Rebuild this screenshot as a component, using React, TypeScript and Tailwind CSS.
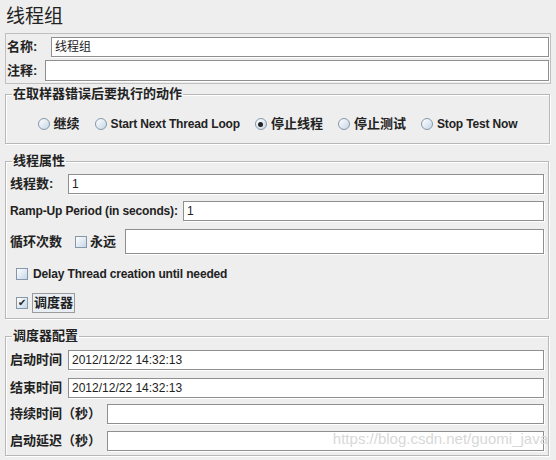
import type { ReactNode } from "react";

const Field = ({ value = "", className = "" }: { value?: string; className?: string }) => (
  <div
    className={`bg-white border border-[#8f8f8f] shadow-[1px_1px_0_#ffffff] flex items-center pl-[3px] text-[12px] font-normal text-[#222] ${className}`}
  >
    {value}
  </div>
);

const Cn = ({ children, className = "" }: { children: ReactNode; className?: string }) => (
  <span className={`shrink-0 whitespace-nowrap text-[13px] font-bold text-[#222] ${className}`}>{children}</span>
);

const En = ({ children, className = "" }: { children: ReactNode; className?: string }) => (
  <span className={`shrink-0 whitespace-nowrap text-[12px] font-bold tracking-[-0.15px] text-[#222] ${className}`}>
    {children}
  </span>
);

const Radio = ({ checked = false }: { checked?: boolean }) => (
  <span className="w-[12px] h-[12px] rounded-full border border-[#8497ab] bg-gradient-to-br from-white to-[#c6d6e6] flex items-center justify-center">
    {checked && <span className="w-[5px] h-[5px] rounded-full bg-[#222]" />}
  </span>
);

const Check = ({ checked = false }: { checked?: boolean }) => (
  <span className="shrink-0 w-[12px] h-[12px] border border-[#8497ab] bg-gradient-to-br from-white to-[#c6d6e6] flex items-center justify-center text-[10px] leading-none text-[#222]">
    {checked && "✔"}
  </span>
);

const Group = ({ title, className = "", children }: { title: string; className?: string; children: ReactNode }) => (
  <fieldset className={`ml-[5px] border border-[#b8b8b8] shadow-[inset_1px_1px_0_#ffffff,1px_1px_0_#ffffff] ${className}`}>
    <legend className="ml-[6px] px-[1px] text-[13px] leading-[14px] font-bold text-[#222]">{title}</legend>
    {children}
  </fieldset>
);

const actions = [
  { label: "继续", cn: true },
  { label: "Start Next Thread Loop", cn: false },
  { label: "停止线程", cn: true, checked: true },
  { label: "停止测试", cn: true },
  { label: "Stop Test Now", cn: false },
];

export default function App() {
  return (
    <div className="relative w-[556px] h-[460px] overflow-hidden bg-[#eeeeee] font-['Liberation_Sans','Noto_Sans_CJK_SC',sans-serif] text-[#222]">
      <div className="h-[33px] pl-[6px] pt-[6px] text-[19px] leading-[22px]">线程组</div>

      <div className="ml-[5px] w-[546px] h-[51px] border border-[#c0c0c0] pt-[3px] flex flex-col gap-[3px]">
        <div className="flex items-center h-[20px]">
          <Cn className="w-[45px] pl-[1px]">名称:</Cn>
          <Field value="线程组" className="flex-1 h-[20px] mr-[1px]" />
        </div>
        <div className="flex items-center h-[21px]">
          <Cn className="w-[39px] pl-[1px]">注释:</Cn>
          <Field className="flex-1 h-[21px] mr-[1px]" />
        </div>
      </div>

      <Group title="在取样器错误后要执行的动作" className="mt-[3px] w-[545px] h-[57px]">
        <div className="mt-[15px] h-[16px] flex items-center justify-center gap-[15px]">
          {actions.map((a) => (
            <div key={a.label} className="flex items-center gap-[4px]">
              <Radio checked={a.checked} />
              {a.cn ? <Cn>{a.label}</Cn> : <En>{a.label}</En>}
            </div>
          ))}
        </div>
      </Group>

      <Group title="线程属性" className="mt-[10px] w-[544px] h-[165px]">
        <div className="mt-[6px] flex items-center h-[20px]">
          <Cn className="w-[62px] pl-[4px]">线程数:</Cn>
          <Field value="1" className="flex-1 h-[20px] mr-[4px]" />
        </div>
        <div className="mt-[7px] flex items-center h-[20px]">
          <En className="w-[177px] pl-[4px]">Ramp-Up Period (in seconds):</En>
          <Field value="1" className="flex-1 h-[20px] mr-[4px]" />
        </div>
        <div className="mt-[8px] flex items-center h-[25px]">
          <Cn className="w-[69px] pl-[4px]">循环次数</Cn>
          <Check />
          <Cn className="ml-[3px]">永远</Cn>
          <Field className="flex-1 h-[25px] ml-[9px] mr-[4px]" />
        </div>
        <div className="mt-[12px] flex items-center h-[16px] pl-[10px]">
          <Check />
          <En className="ml-[5px]">Delay Thread creation until needed</En>
        </div>
        <div className="mt-[11px] flex items-center h-[20px] pl-[10px]">
          <Check checked />
          <span className="ml-[4px] h-[20px] flex items-center px-[1px] border border-[#9a9a9a] bg-[#e8eef4]">
            <Cn>调度器</Cn>
          </span>
        </div>
      </Group>

      <Group title="调度器配置" className="mt-[10px] w-[544px] h-[127px]">
        <div className="mt-[7px] flex items-center h-[20px]">
          <Cn className="w-[62px] pl-[4px]">启动时间</Cn>
          <Field value="2012/12/22 14:32:13" className="flex-1 h-[20px] mr-[4px]" />
        </div>
        <div className="mt-[8px] flex items-center h-[20px]">
          <Cn className="w-[62px] pl-[4px]">结束时间</Cn>
          <Field value="2012/12/22 14:32:13" className="flex-1 h-[20px] mr-[4px]" />
        </div>
        <div className="mt-[6px] flex items-center h-[20px]">
          <Cn className="w-[101px] pl-[4px]">持续时间（秒）</Cn>
          <Field className="flex-1 h-[20px] mr-[4px]" />
        </div>
        <div className="mt-[7px] flex items-center h-[20px]">
          <Cn className="w-[101px] pl-[4px]">启动延迟（秒）</Cn>
          <Field className="flex-1 h-[20px] mr-[4px]" />
        </div>
      </Group>

      <div className="absolute right-[8px] bottom-[10px] text-[15px] text-[#d8d8d8] pointer-events-none">
        https://blog.csdn.net/guomi_java
      </div>
    </div>
  );
}
